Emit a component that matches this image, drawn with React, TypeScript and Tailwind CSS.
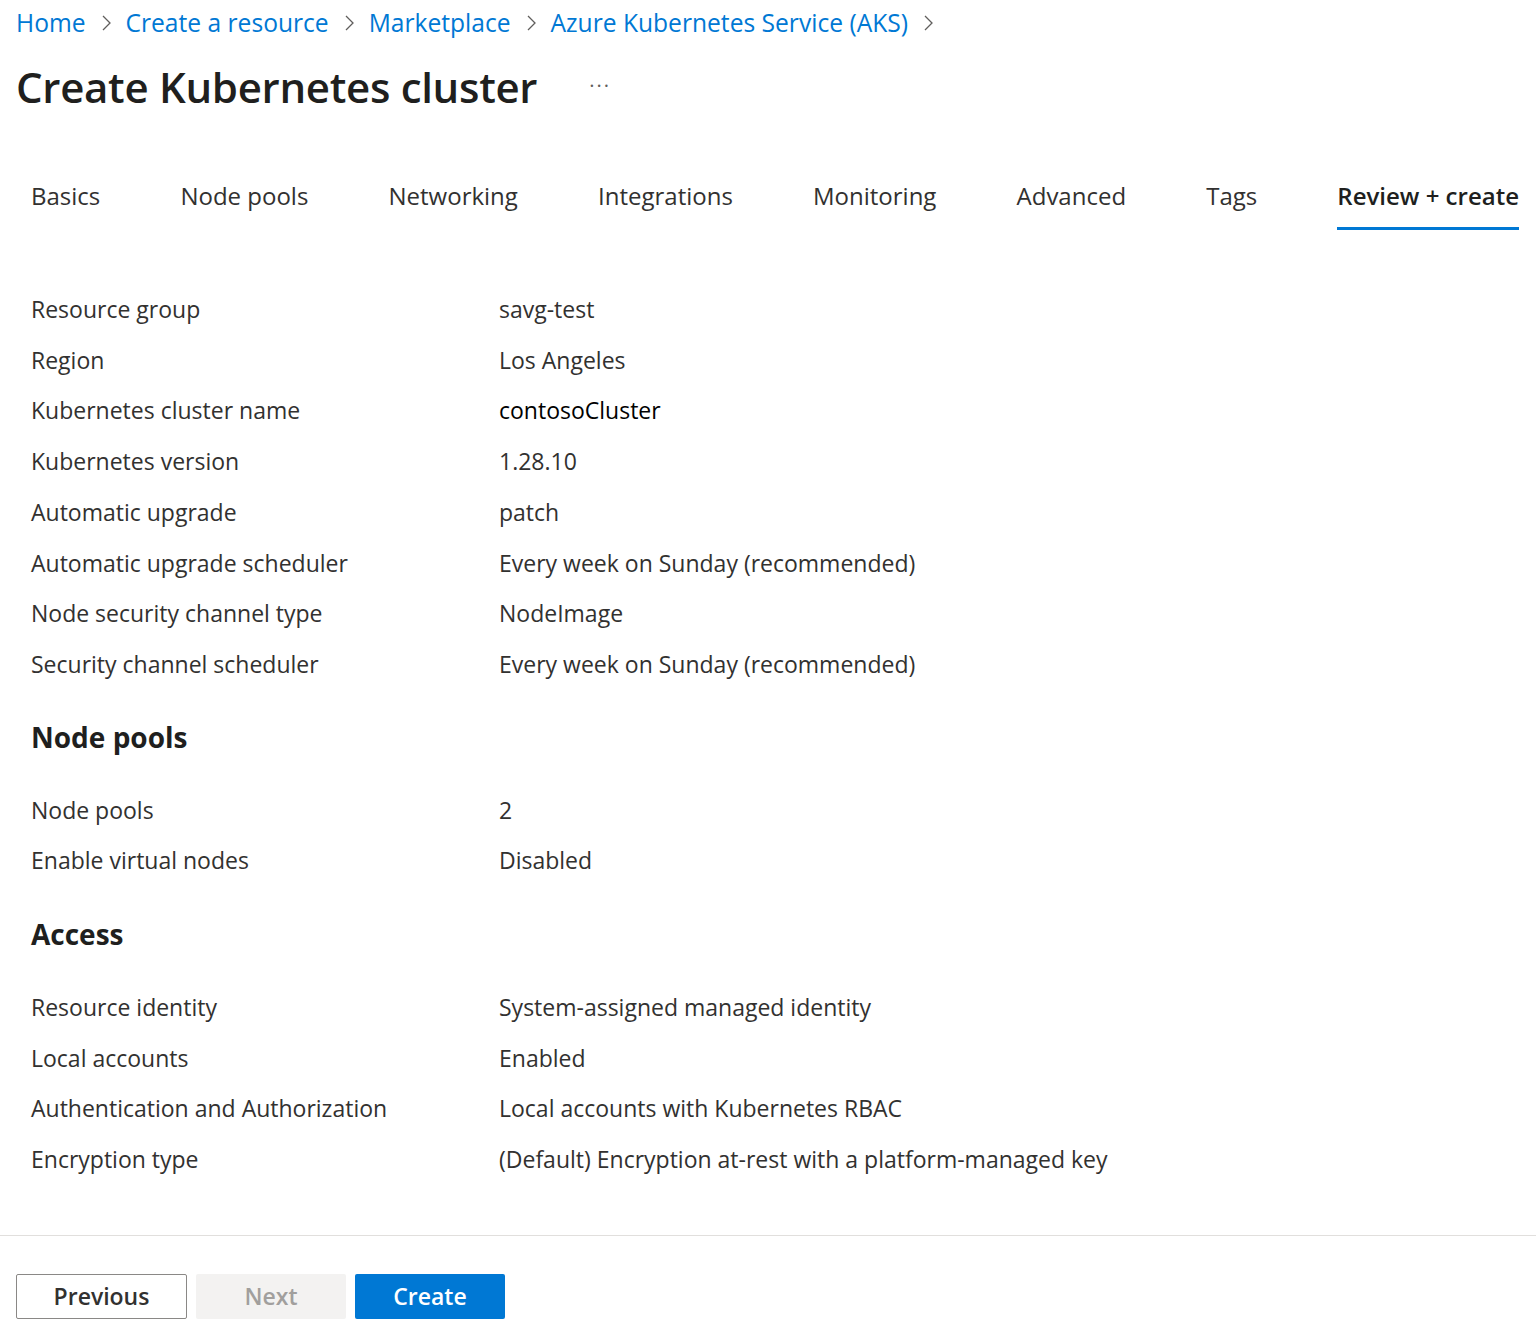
import React from "react";

const font = { fontFamily: '"Open Sans", "Noto Sans", sans-serif' };

function Chevron() {
  return (
    <svg width="12" height="20" viewBox="0 0 12 20" className="mx-[14px]" fill="none">
      <path d="M3 3 L10 10 L3 17" stroke="#605e5c" strokeWidth="1.3" />
    </svg>
  );
}

const tabs = ["Basics", "Node pools", "Networking", "Integrations", "Monitoring", "Advanced", "Tags", "Review + create"];

type Row = [string, string];

const basics: Row[] = [
  ["Resource group", "savg-test"],
  ["Region", "Los Angeles"],
  ["Kubernetes cluster name", "contosoCluster"],
  ["Kubernetes version", "1.28.10"],
  ["Automatic upgrade", "patch"],
  ["Automatic upgrade scheduler", "Every week on Sunday (recommended)"],
  ["Node security channel type", "NodeImage"],
  ["Security channel scheduler", "Every week on Sunday (recommended)"],
];
const pools: Row[] = [
  ["Node pools", "2"],
  ["Enable virtual nodes", "Disabled"],
];
const access: Row[] = [
  ["Resource identity", "System-assigned managed identity"],
  ["Local accounts", "Enabled"],
  ["Authentication and Authorization", "Local accounts with Kubernetes RBAC"],
  ["Encryption type", "(Default) Encryption at-rest with a platform-managed key"],
];

function Rows({ rows }: { rows: Row[] }) {
  return (
    <div className="flex flex-col">
      {rows.map(([l, v]) => (
        <div key={l} className="flex h-[50.7px] items-center text-[23px] text-[#323130]">
          <div className="w-[468px] shrink-0">{l}</div>
          <div className={v === "contosoCluster" ? "text-black" : ""}>{v}</div>
        </div>
      ))}
    </div>
  );
}

export default function App() {
  return (
    <div style={font} className="w-[1536px] h-[1325px] bg-white text-[#323130] flex flex-col overflow-hidden">
      <div className="px-[16px]">
        <div className="flex items-center h-[46px] text-[24.6px] text-[#0078d4]">
          <span>Home</span>
          <Chevron />
          <span>Create a resource</span>
          <Chevron />
          <span>Marketplace</span>
          <Chevron />
          <span>Azure Kubernetes Service (AKS)</span>
          <Chevron />
        </div>
        <div className="flex items-center h-[80px]">
          <h1 className="text-[42px] font-semibold text-[#201f1e] tracking-[-0.3px]">Create Kubernetes cluster</h1>
          <span className="ml-[52px] text-[20px] text-[#605e5c] tracking-[2px]">···</span>
        </div>
      </div>
      <div className="pl-[31px] pr-[17px] mt-[52px]">
        <div className="flex justify-between text-[24px] text-[#323130]">
          {tabs.map((t) => (
            <div key={t} className="flex flex-col">
              <div className={"h-[36px] flex items-center " + (t === "Review + create" ? "font-semibold text-[#201f1e]" : "")}>{t}</div>
              <div className={"mt-[13px] h-[3px] " + (t === "Review + create" ? "bg-[#0078d4]" : "bg-transparent")} />
            </div>
          ))}
        </div>
      </div>
      <div className="px-[31px] mt-[54px]">
        <Rows rows={basics} />
        <h2 className="text-[28px] font-bold text-[#201f1e] mt-[27px] mb-[28px] leading-[40px]">Node pools</h2>
        <Rows rows={pools} />
        <h2 className="text-[28px] font-bold text-[#201f1e] mt-[28px] mb-[28px] leading-[40px]">Access</h2>
        <Rows rows={access} />
      </div>
      <div className="mt-auto border-t border-[#e1dfdd] h-[90px] px-[16px] flex items-start pt-[38px] gap-[9px] text-[23px] font-semibold">
        <button className="w-[171px] h-[45px] border border-[#8a8886] rounded-[2px] text-[#323130] bg-white">Previous</button>
        <button className="w-[150px] h-[45px] rounded-[2px] bg-[#f3f2f1] text-[#a19f9d]">Next</button>
        <button className="w-[150px] h-[45px] rounded-[2px] bg-[#0078d4] text-white">Create</button>
      </div>
    </div>
  );
}
